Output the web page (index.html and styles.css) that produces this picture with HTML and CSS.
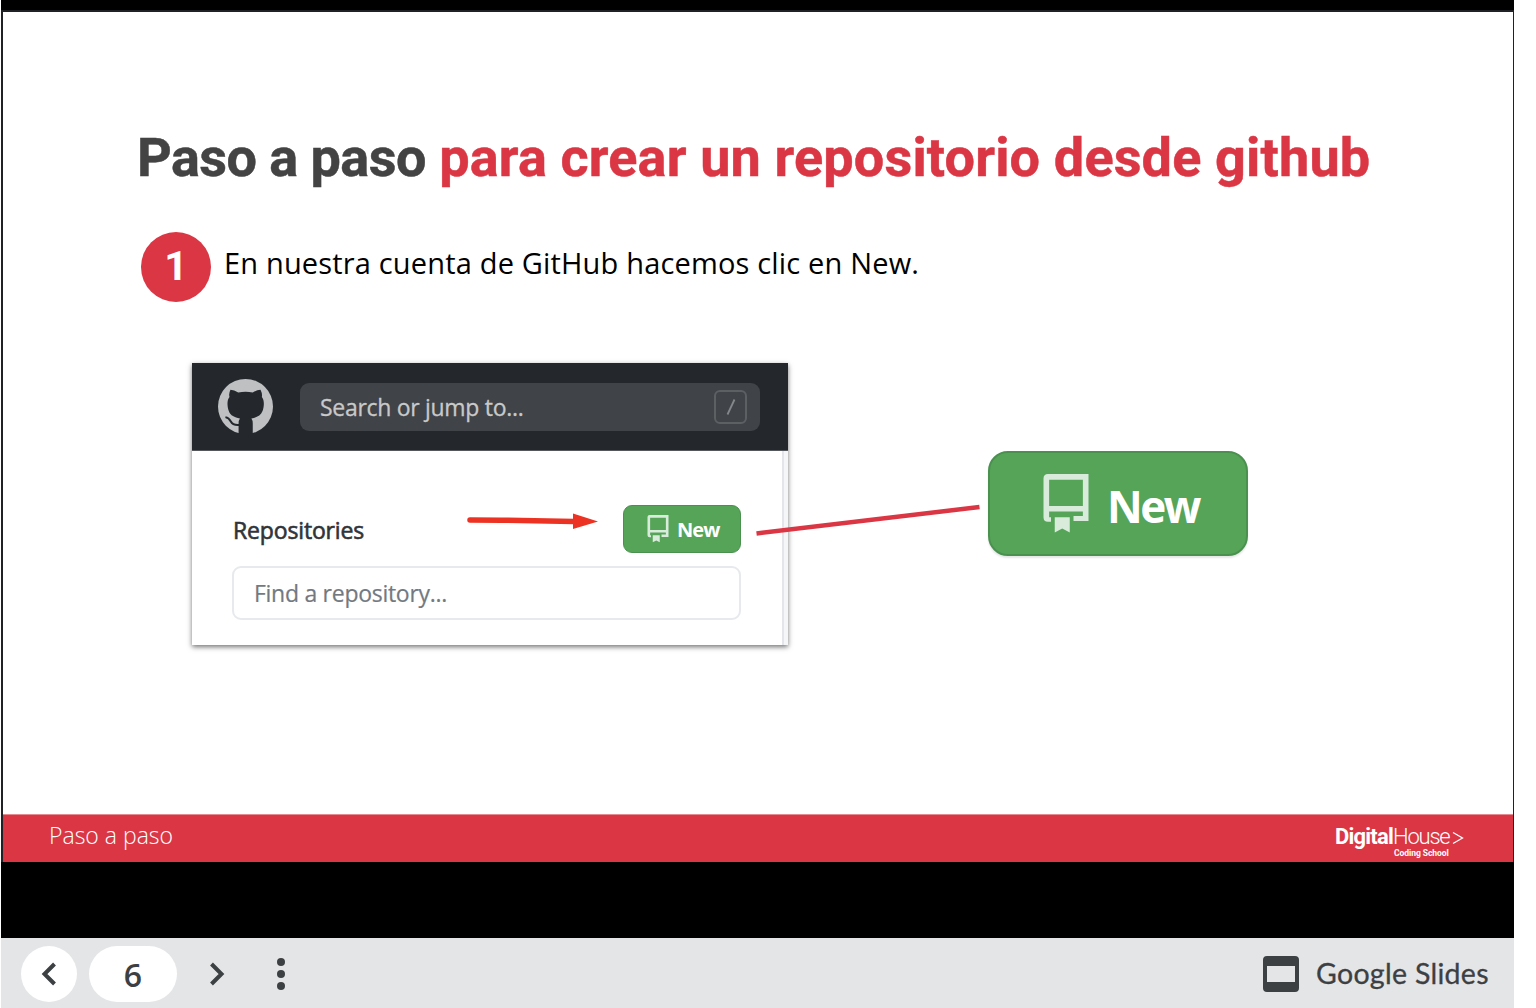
FILE: index.html
```
<!DOCTYPE html>
<html lang="es">
<head>
<meta charset="utf-8">
<title>Paso a paso</title>
<link rel="stylesheet" href="styles.css">
</head>
<body>
<svg class="defs" aria-hidden="true">
  <symbol id="repo" viewBox="0 0 16 16"><path fill-rule="evenodd" d="M2 1.200Q2 0 3.200 0H14V12.500H10V11.200H12.500V10H3.500V11.500H4V12.700H3.200Q2 12.700 2 11.500ZM12.500 1.500H3.500V8.500H12.500ZM5 11.500H9V15.600L7 14.500 5 15.600Z"/></symbol>
</svg>
<div class="viewer">
  <main class="slide">
    <div class="content">
      <h1 class="title"><span class="title-dark">Paso a paso</span> <span class="title-red">para crear un repositorio desde github</span></h1>
      <div class="step">
        <div class="step-number">1</div>
        <p class="step-text">En nuestra cuenta de GitHub hacemos clic en New.</p>
      </div>
      <div class="figures">
        <section class="card">
          <header class="card-head">
            <svg class="mark" viewBox="0 0 163 163"><circle cx="81.500" cy="81.500" r="81.500"/><path class="mark-cat" d="M37 32Q48 32 60 40 82 36 103 40 115 32 126 32 132 44 130 53C139 64 136 84 132 95 127 109 115 114 99 117Q103 122 103 132V164H61V132Q61 122 65 117C49 114 37 109 32 95 28 84 25 64 34 53Q31 44 37 32Z"/><path class="mark-tail" d="M22 113Q32 115 38 126 44 138 64 136"/></svg>
            <div class="search"><span class="search-text">Search or jump to...</span><span class="key"><svg viewBox="0 0 10 18"><path d="M1.500 16.500 8.500 1.500"/></svg></span></div>
          </header>
          <div class="card-body">
            <div class="repo-row">
              <h2 class="repo-title">Repositories</h2>
              <svg class="arrow" viewBox="0 0 132 18"><path class="arrow-line" d="M3 7 34 7.200 107 8.500"/><path class="arrow-head" d="M106 .5 131 8.500 106 16Z"/></svg>
              <div class="new"><svg class="new-icon"><use href="#repo"/></svg><span class="new-text">New</span></div>
            </div>
            <div class="find"><span class="find-text">Find a repository...</span></div>
          </div>
        </section>
        <svg class="connector" viewBox="0 0 224 34"><path d="M.5 30.500 223.500 4"/></svg>
        <div class="new new-large"><svg class="new-icon"><use href="#repo"/></svg><span class="new-text">New</span></div>
      </div>
    </div>
    <footer class="slide-foot">
      <span class="foot-text">Paso a paso</span>
      <div class="brand">
        <div class="brand-name"><b>Digital</b><span class="brand-thin">House</span><svg class="brand-mark" viewBox="0 0 12 14"><path d="M1 1.500 10.500 7 1 12.500"/></svg></div>
        <div class="brand-sub">Coding School</div>
      </div>
    </footer>
  </main>
  <nav class="toolbar">
    <div class="round"><svg class="chev" viewBox="0 0 16 24"><path d="M13.500 2 3.500 12 13.500 22"/></svg></div>
    <div class="page">6</div>
    <svg class="chev next" viewBox="0 0 16 24"><path d="M2.500 2 12.500 12 2.500 22"/></svg>
    <svg class="dots" viewBox="0 0 8 32"><circle cx="4" cy="4" r="4"/><circle cx="4" cy="16" r="4"/><circle cx="4" cy="28" r="4"/></svg>
    <div class="product"><span class="slides-icon"></span><span class="product-name">Google Slides</span></div>
  </nav>
</div>
</body>
</html>
```
FILE: styles.css
```
* { box-sizing: border-box; }
body { margin: 0; background: #fff; font-family: "Open Sans", "Noto Sans", sans-serif; overflow: hidden; }
svg { display: block; flex: none; }
h1, h2, p { margin: 0; font-weight: inherit; }
span, p, h1, h2, b { white-space: nowrap; }
.defs { width: 0; height: 0; display: none; }

.viewer { width: 1513px; height: 1008px; margin-left: 1px; padding-top: 10px; background: #000; display: flex; flex-direction: column; }
.slide { height: 852px; border: solid #1f2124; border-width: 2px 1px 0 2px; background: #fff; display: flex; flex-direction: column; }
.content { flex: 1; padding: 111px 0 0 134px; }

.title { height: 70px; font: 700 54px/69px Roboto, sans-serif; color: #434343; -webkit-text-stroke: .5px currentColor; }
.title-dark { letter-spacing: -.55px; }
.title-red { color: #da3644; letter-spacing: .16px; }

.step { display: flex; margin: 39px 0 0 4px; height: 70px; }
.step-number { width: 70px; height: 70px; border-radius: 50%; background: #da3644; color: #fff; font: 700 41px/69px Roboto, sans-serif; text-align: center; }
.step-text { margin-left: 13px; font-size: 29px; line-height: 40px; letter-spacing: .17px; padding-top: 11px; color: #000; }

.figures { display: flex; margin: 61px 0 0 55px; }
.card { width: 596px; height: 282px; background: #fff; box-shadow: 0 2px 5px rgba(0,0,0,.55); }
.card-head { height: 88px; background: #24282d; border-bottom: 1px solid #54585c; display: flex; align-items: center; padding-left: 26px; }
.mark { width: 55px; height: 55px; fill: #bec0c2; }
.mark-cat { fill: #24282d; }
.mark-tail { fill: none; stroke: #24282d; stroke-width: 6; }
.search { width: 460px; height: 48px; margin-left: 27px; border-radius: 9px; background: #404347; display: flex; align-items: center; justify-content: space-between; padding: 0 13px 0 20px; }
.search-text { color: #c8c9ca; font-size: 23px; line-height: 46px; letter-spacing: -.3px; -webkit-text-stroke: .3px #c8c9ca; }
.key { width: 33px; height: 34px; border: 2px solid #5c6063; border-radius: 6px; display: grid; place-items: center; }
.key svg { width: 10px; height: 18px; fill: none; stroke: #85888b; stroke-width: 1.8; }
.card-body { height: 194px; padding: 54px 41px 0 41px; background: linear-gradient(90deg, transparent 590px, #e3e5ea 590px, #e3e5ea 592px, #f5f6f8 592px); }
.repo-row { display: flex; height: 48px; width: 508px; }
.repo-title { width: 234px; font-size: 23px; line-height: 51px; letter-spacing: -.15px; color: #30343a; -webkit-text-stroke: .6px #30343a; }
.arrow { width: 132px; height: 18px; margin-top: 8px; }
.arrow-line { fill: none; stroke: #ec3323; stroke-width: 5.500; stroke-linecap: round; }
.arrow-head { fill: #ec3323; }
.new { width: 118px; height: 48px; margin-left: auto; border: 1px solid #4a9150; border-radius: 9px; background: #55a457; color: #fff; display: flex; align-items: center; padding-left: 20px; }
.new-icon { width: 28px; height: 28px; fill: #d9ecdb; }
.new-text { margin-left: 5px; font-size: 20px; font-weight: 700; letter-spacing: -.9px; line-height: 46px; padding-top: 2px; }
.find { width: 509px; height: 54px; margin: 13px 0 0 -1px; border: 2px solid #e7e9ed; border-radius: 9px; padding-left: 20px; }
.find-text { font-size: 23px; line-height: 50px; letter-spacing: -.28px; color: #737981; -webkit-text-stroke: .2px #737981; }
.connector { width: 224px; height: 34px; margin: 140px 0 0 -32px; z-index: 1; }
.connector path { fill: none; stroke: #da3644; stroke-width: 4.500; }
.new-large { width: 260px; height: 105px; margin: 88px 0 0 8px; border-width: 2px; border-radius: 20px; padding-left: 46px; box-shadow: 0 2px 2px rgba(0,0,0,.1); }
.new-large .new-icon { width: 60px; height: 60px; }
.new-large .new-text { margin-left: 11px; font-size: 44px; letter-spacing: -2.500px; line-height: 100px; padding-top: 5px; }

.slide-foot { height: 48px; background: #da3644; border-top: 1px solid #e68a91; color: #fff; display: flex; justify-content: space-between; }
.foot-text { padding-left: 46px; font-size: 23px; font-weight: 300; line-height: 40px; }
.brand { width: 178px; padding-top: 8px; }
.brand-name { height: 26px; font: 300 22px/28px Roboto, sans-serif; display: flex; }
.brand-name b { width: 58px; font-weight: 700; letter-spacing: -.8px; }
.brand-thin { width: 57px; letter-spacing: -1.200px; }
.brand-mark { width: 12px; height: 14px; margin: 8px 0 0 2px; fill: none; stroke: #fff; stroke-width: 1.300; }
.brand-sub { font: 700 8.500px/9px Roboto, sans-serif; padding-left: 59px; letter-spacing: -.05px; }

.toolbar { height: 70px; margin-top: auto; background: #e4e5e7; color: #3c4043; display: flex; align-items: center; padding: 2px 25px 0 20px; }
.round { width: 56px; height: 56px; border-radius: 50%; background: #fff; display: grid; place-items: center; }
.chev { width: 16px; height: 24px; fill: none; stroke: #3c4043; stroke-width: 4; }
.page { width: 88px; height: 56px; margin-left: 12px; border-radius: 28px; background: #fff; text-align: center; font-size: 32px; font-weight: 600; line-height: 58px; }
.next { margin-left: 32px; }
.dots { width: 8px; height: 32px; margin-left: 52px; fill: #3c4043; }
.product { display: flex; align-items: center; margin-left: auto; width: 226px; }
.slides-icon { width: 36px; height: 36px; border: solid #3c4043; border-width: 10px 4px; border-radius: 4px; flex: none; }
.product-name { margin: -3px 0 0 17px; font: 400 28.500px/40px Lato, sans-serif; letter-spacing: .3px; -webkit-text-stroke: .3px currentColor; }
```
